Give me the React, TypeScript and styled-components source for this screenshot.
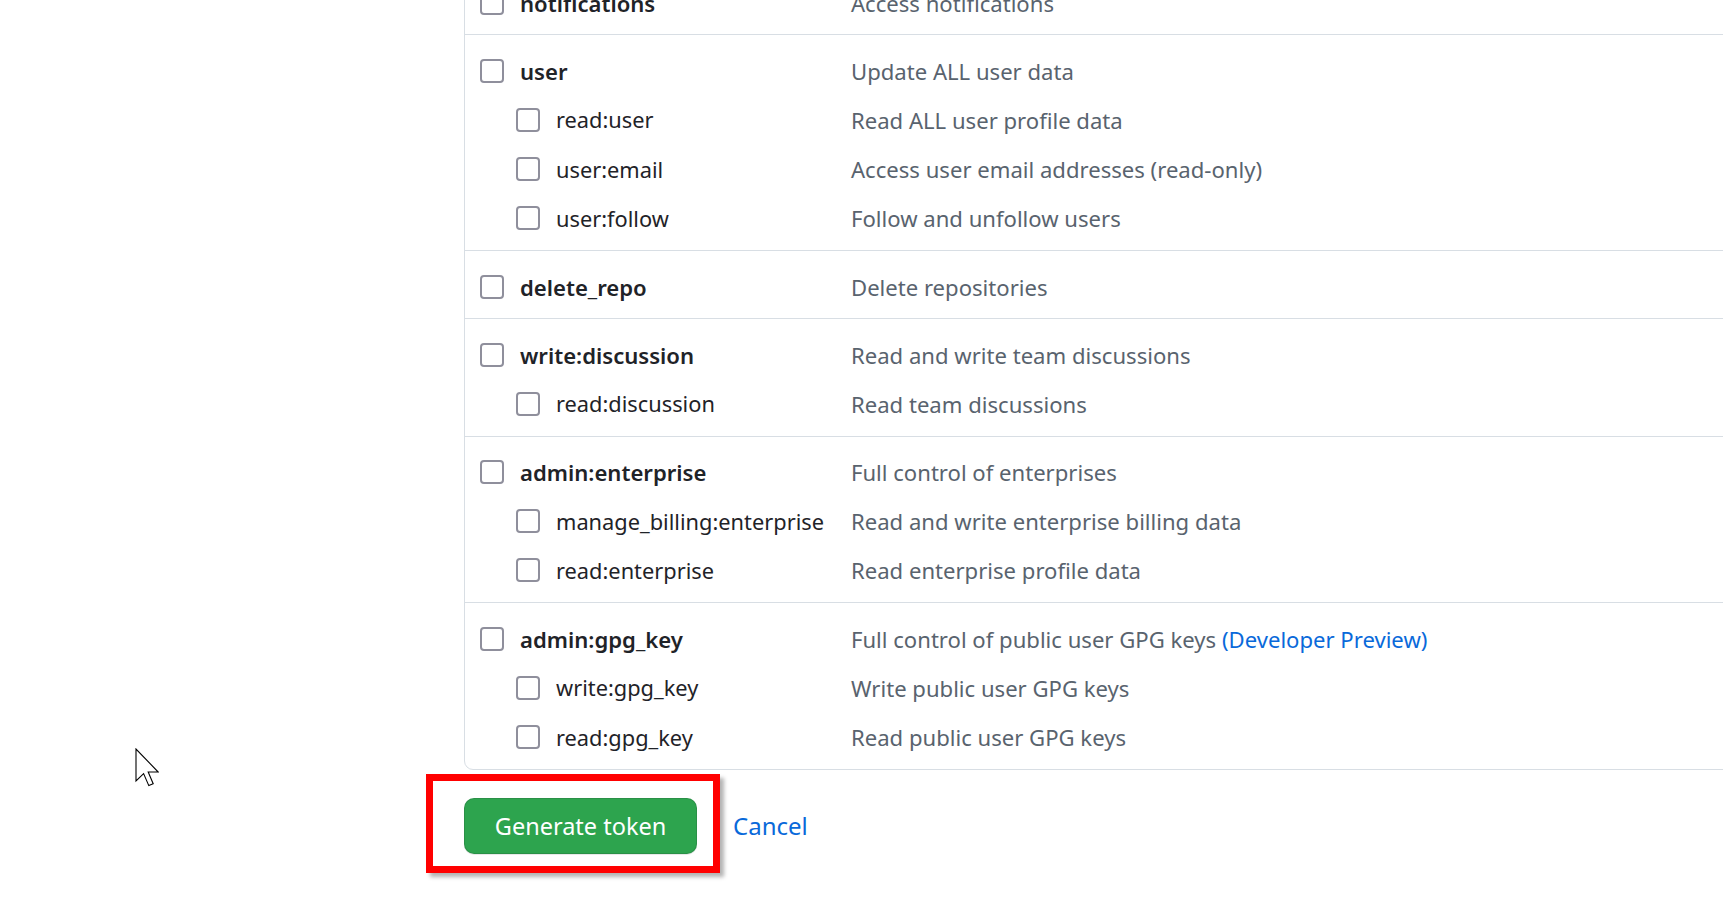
import React from "react";
import styled, { createGlobalStyle } from "styled-components";

const GlobalStyle = createGlobalStyle`
  html, body {
    margin: 0;
    padding: 0;
    background: #ffffff;
    overflow: hidden;
  }
  body {
    font-family: "Noto Sans", "Open Sans", "Liberation Sans", sans-serif;
    color: #1f2328;
  }
`;

const Page = styled.div`
  position: relative;
  width: 1723px;
  height: 899px;
  overflow: hidden;
`;

const Main = styled.main`
  margin-top: -34px;
  padding-left: 464px;
  display: flex;
  flex-direction: column;
`;

const Panel = styled.section`
  border: 1px solid #d8dee4;
  border-radius: 9px;
  margin-right: -40px;
`;

const Group = styled.div`
  padding: 11px 0 7px;
  & + & {
    border-top: 1px solid #d8dee4;
  }
`;

const Row = styled.div`
  display: grid;
  grid-template-columns: 386px 1fr;
  align-items: center;
  height: 49.2px;
  font-size: 22.1px;
`;

const LabelCell = styled.label<{ $sub?: boolean }>`
  display: flex;
  align-items: center;
  gap: 16px;
  padding-left: ${(p) => (p.$sub ? 51 : 15)}px;
  font-weight: ${(p) => (p.$sub ? 400 : 600)};
  font-size: ${(p) => (p.$sub ? 21.8 : 22.1)}px;
  color: #1f2328;
  white-space: nowrap;
`;

const Box = styled.input.attrs({ type: "checkbox" })`
  appearance: none;
  -webkit-appearance: none;
  margin: 0;
  flex: none;
  width: 24px;
  height: 24px;
  box-sizing: border-box;
  border: 2.5px solid #8f8f9c;
  border-radius: 4px;
  background: #fff;
`;

const Desc = styled.span`
  color: #59636e;
  white-space: nowrap;
`;

const Link = styled.a`
  color: #0969da;
  text-decoration: none;
`;

const Actions = styled.div`
  display: flex;
  align-items: center;
  gap: 36px;
  margin-top: 28px;
`;

const GreenButton = styled.button`
  font-family: inherit;
  font-size: 23.5px;
  color: #ffffff;
  background: #2da44e;
  border: 1px solid rgba(27, 31, 36, 0.15);
  border-radius: 10px;
  height: 56px;
  padding: 0 20px;
  width: 233px;
  box-shadow: 0 1px 0 rgba(27, 31, 36, 0.1);
`;

const CancelLink = styled.a`
  font-size: 24px;
  color: #0969da;
  text-decoration: none;
`;

const Highlight = styled.div`
  position: absolute;
  left: 426px;
  top: 774px;
  width: 294px;
  height: 99px;
  box-sizing: border-box;
  border: 7px solid #ff0000;
  box-shadow: 4px 4px 4px rgba(0, 0, 0, 0.3);
  pointer-events: none;
`;

const Cursor = styled.svg`
  position: absolute;
  left: 135px;
  top: 748px;
`;

type Scope = { name: string; desc: React.ReactNode; sub?: boolean };

const groups: Scope[][] = [
  [{ name: "notifications", desc: "Access notifications" }],
  [
    { name: "user", desc: "Update ALL user data" },
    { name: "read:user", desc: "Read ALL user profile data", sub: true },
    { name: "user:email", desc: "Access user email addresses (read-only)", sub: true },
    { name: "user:follow", desc: "Follow and unfollow users", sub: true },
  ],
  [{ name: "delete_repo", desc: "Delete repositories" }],
  [
    { name: "write:discussion", desc: "Read and write team discussions" },
    { name: "read:discussion", desc: "Read team discussions", sub: true },
  ],
  [
    { name: "admin:enterprise", desc: "Full control of enterprises" },
    { name: "manage_billing:enterprise", desc: "Read and write enterprise billing data", sub: true },
    { name: "read:enterprise", desc: "Read enterprise profile data", sub: true },
  ],
  [
    {
      name: "admin:gpg_key",
      desc: (
        <>
          Full control of public user GPG keys <Link href="#">(Developer Preview)</Link>
        </>
      ),
    },
    { name: "write:gpg_key", desc: "Write public user GPG keys", sub: true },
    { name: "read:gpg_key", desc: "Read public user GPG keys", sub: true },
  ],
];

export default function App() {
  return (
    <Page>
      <GlobalStyle />
      <Main>
        <Panel>
          {groups.map((g, gi) => (
            <Group key={gi}>
              {g.map((s) => (
                <Row key={s.name}>
                  <LabelCell $sub={s.sub}>
                    <Box />
                    {s.name}
                  </LabelCell>
                  <Desc>{s.desc}</Desc>
                </Row>
              ))}
            </Group>
          ))}
        </Panel>
        <Actions>
          <GreenButton>Generate token</GreenButton>
          <CancelLink href="#">Cancel</CancelLink>
        </Actions>
      </Main>
      <Highlight />
      <Cursor width="24" height="39" viewBox="0 0 12 19.5">
        <polygon
          points="0.5,0.5 0.5,16.5 4.3,12.8 6.9,18.8 9.1,17.9 6.6,12 11.6,12"
          fill="#ffffff"
          stroke="#000000"
          strokeWidth="1.1"
          vectorEffect="non-scaling-stroke"
          strokeLinejoin="miter"
        />
      </Cursor>
    </Page>
  );
}
